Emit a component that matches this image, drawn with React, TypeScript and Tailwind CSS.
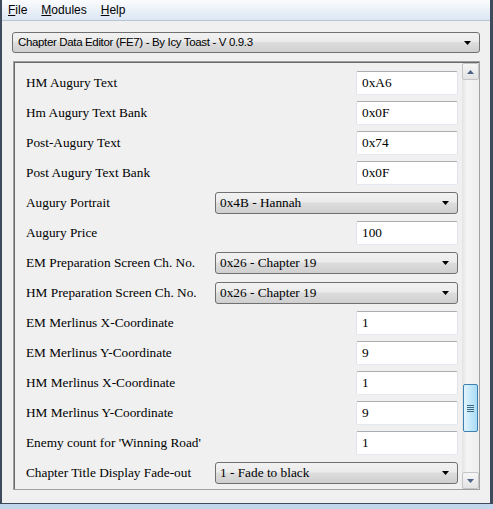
import { Fragment } from "react";

type Row = { label: string; kind: "text" | "combo"; value: string };

const rows: Row[] = [
  { label: "HM Augury Text", kind: "text", value: "0xA6" },
  { label: "Hm Augury Text Bank", kind: "text", value: "0x0F" },
  { label: "Post-Augury Text", kind: "text", value: "0x74" },
  { label: "Post Augury Text Bank", kind: "text", value: "0x0F" },
  { label: "Augury Portrait", kind: "combo", value: "0x4B - Hannah" },
  { label: "Augury Price", kind: "text", value: "100" },
  { label: "EM Preparation Screen Ch. No.", kind: "combo", value: "0x26 - Chapter 19" },
  { label: "HM Preparation Screen Ch. No.", kind: "combo", value: "0x26 - Chapter 19" },
  { label: "EM Merlinus X-Coordinate", kind: "text", value: "1" },
  { label: "EM Merlinus Y-Coordinate", kind: "text", value: "9" },
  { label: "HM Merlinus X-Coordinate", kind: "text", value: "1" },
  { label: "HM Merlinus Y-Coordinate", kind: "text", value: "9" },
  { label: "Enemy count for 'Winning Road'", kind: "text", value: "1" },
  { label: "Chapter Title Display Fade-out", kind: "combo", value: "1 - Fade to black" },
]

const serif = "font-['Liberation_Serif','Times_New_Roman',serif]"
const sans = "font-['Liberation_Sans',Arial,sans-serif]"

function DropArrow({ color = "#000" }: { color?: string }) {
  return (
    <svg width="7" height="4" viewBox="0 0 7 4" className="shrink-0">
      <path d="M0 0 H7 L3.5 4 Z" fill={color} />
    </svg>
  )
}

function ComboBox({ value, className, textClass }: { value: string; className?: string; textClass?: string }) {
  return (
    <div
      className={`flex items-center justify-between rounded-[3px] border border-[#707070] bg-[linear-gradient(to_bottom,#f2f2f2_0%,#ebebeb_45%,#dddddd_50%,#cfcfcf_100%)] pl-[4px] pr-[8px] ${className ?? ""}`}
    >
      <span className={`text-black leading-none ${textClass ?? ""}`}>{value}</span>
      <DropArrow />
    </div>
  )
}

function ScrollButton({ up }: { up?: boolean }) {
  return (
    <div className="h-[17px] w-[17px] flex items-center justify-center rounded-[2px] border border-[#c5c5c5] bg-[linear-gradient(to_bottom,#f6f6f6,#e3e3e3)]">
      <svg width="7" height="4" viewBox="0 0 7 4" className={up ? "rotate-180" : ""}>
        <path d="M0 0 H7 L3.5 4 Z" fill="#4d6185" />
      </svg>
    </div>
  )
}

export default function App() {
  return (
    <div className="w-[493px] h-[509px] flex flex-col bg-[#c4d6ec] overflow-hidden">
      <div className="flex-1 flex flex-col bg-[#f0f0f0] border-l-2 border-r-[3px] border-b border-[#3d4b5d] min-h-0">
        {/* menu bar */}
        <div className={`h-[21px] shrink-0 flex items-center gap-[14px] pl-[6px] text-[12px] text-black border-b border-[#b9c4d3] bg-[linear-gradient(to_bottom,#fbfcfe,#dce6f4)] ${sans}`}>
          <span><span className="underline">F</span>ile</span>
          <span><span className="underline">M</span>odules</span>
          <span><span className="underline">H</span>elp</span>
        </div>

        <div className="flex-1 flex flex-col gap-[8px] px-[10px] pt-[11px] pb-[13px] min-h-0">
          <ComboBox
            value="Chapter Data Editor (FE7) - By Icy Toast - V 0.9.3"
            className="h-[21px] shrink-0 pl-[5px]"
            textClass={`text-[11.5px] tracking-[-0.35px] ${sans}`}
          />

          {/* data panel */}
          <div className="flex-1 min-h-0 flex border border-[#a0a0a0] ml-[1px]">
            <div className="flex-1 min-h-0 flex border-t border-l border-[#696969]">
              <div className={`flex-1 min-w-0 overflow-hidden flex flex-col pt-[5px] pl-[11px] pr-[4px] text-[13.3px] text-black ${serif}`}>
                {rows.map((row, i) => (
                  <Fragment key={i}>
                    <div className="h-[30px] shrink-0 flex items-center justify-between">
                      <span className="leading-none">{row.label}</span>
                      {row.kind === "text" ? (
                        <div className="w-[102px] h-[24px] flex items-center pl-[5px] bg-white rounded-[2px] border border-[#e2e3ea] border-t-[#abadb3] border-b-[#e3e9ef]">
                          <span className="leading-none">{row.value}</span>
                        </div>
                      ) : (
                        <ComboBox value={row.value} className="w-[243px] h-[22px]" />
                      )}
                    </div>
                  </Fragment>
                ))}
              </div>

              {/* scrollbar */}
              <div className="w-[17px] shrink-0 flex flex-col bg-[linear-gradient(to_right,#e4e4e4,#f4f4f4_30%,#eeeeee)]">
                <ScrollButton up />
                <div className="flex-1 flex flex-col">
                  <div className="h-[304px] shrink-0" />
                  <div className="h-[48px] shrink-0 mx-[1px] rounded-[2px] border border-[#3c7fb1] bg-[linear-gradient(to_right,#e3f4fc,#c4e8fa_50%,#a9dbf6)] flex flex-col items-center justify-center gap-[1px]">
                    <div className="w-[7px] h-[1px] bg-[#3e6a8a]" />
                    <div className="w-[7px] h-[1px] bg-[#3e6a8a]" />
                    <div className="w-[7px] h-[1px] bg-[#3e6a8a]" />
                    <div className="w-[7px] h-[1px] bg-[#3e6a8a]" />
                  </div>
                  <div className="flex-1" />
                </div>
                <ScrollButton />
              </div>
            </div>
          </div>
        </div>
      </div>
      <div className="h-[5px] shrink-0 bg-[#c4d6ec]" />
    </div>
  )
}
